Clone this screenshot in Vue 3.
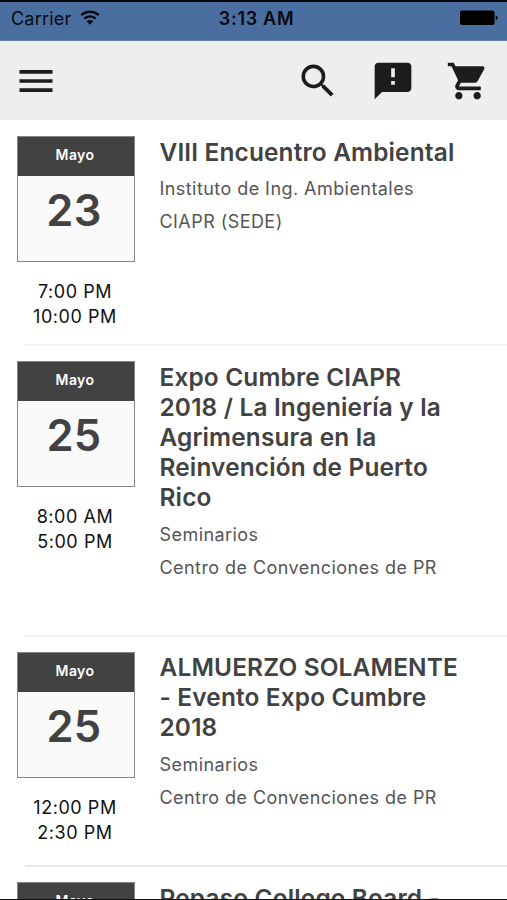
<script setup>
import { ref } from 'vue'

const eventos = ref([
  { id: 1, mes: 'Mayo', dia: 23, inicio: '7:00 PM', fin: '10:00 PM', titulo: ['VIII Encuentro Ambiental'], tipo: 'Instituto de Ing. Ambientales', lugar: 'CIAPR (SEDE)' },
  { id: 2, mes: 'Mayo', dia: 25, inicio: '8:00 AM', fin: '5:00 PM', titulo: ['Expo Cumbre CIAPR', '2018 / La Ingeniería y la', 'Agrimensura en la', 'Reinvención de Puerto', 'Rico'], tipo: 'Seminarios', lugar: 'Centro de Convenciones de PR' },
  { id: 3, mes: 'Mayo', dia: 25, inicio: '12:00 PM', fin: '2:30 PM', titulo: ['ALMUERZO SOLAMENTE', '- Evento Expo Cumbre', '2018'], tipo: 'Seminarios', lugar: 'Centro de Convenciones de PR' },
  { id: 4, mes: 'Mayo', dia: '', inicio: '', fin: '', titulo: ['Repaso College Board -'], tipo: '', lugar: '' }
])
</script>

<template>
  <div class="app">
    <div class="status">
      <div class="carrier">
        <span>Carrier</span>
        <svg width="20" height="15" viewBox="0 0 20 15" fill="none" stroke="#05090f" stroke-width="2.4">
          <path d="M1.2 5.2a12.8 12.8 0 0 1 17.6 0" />
          <path d="M4.300 8.700a8.200 8.200 0 0 1 11.400 0" />
          <path d="M6.600 11.300a4.900 4.900 0 0 1 6.800 0L10 14.700z" fill="#05090f" stroke="none" />
        </svg>
      </div>
      <span class="hora">3:13 AM</span>
      <svg class="bateria" width="38" height="16" viewBox="0 0 38 16">
        <rect x="0" y="0.5" width="34.5" height="14.5" rx="1.8" />
        <path d="M35.7 5.200c2.600.8 2.600 4.200 0 5z" />
      </svg>
    </div>

    <header class="toolbar">
      <button class="menu">
        <svg width="44" height="44" viewBox="0 0 24 24"><path d="M3 18h18v-2H3v2zm0-5h18v-2H3v2zm0-7v2h18V6H3z" /></svg>
      </button>
      <div class="acciones">
        <button>
          <svg width="44" height="44" viewBox="0 0 24 24"><path d="M15.5 14h-.79l-.28-.27A6.471 6.471 0 0 0 16 9.5 6.5 6.5 0 1 0 9.5 16c1.61 0 3.09-.59 4.23-1.57l.27.28v.79l5 4.99L20.49 19l-4.99-5zm-6 0C7.01 14 5 11.99 5 9.5S7.01 5 9.5 5 14 7.01 14 9.5 11.99 14 9.5 14z" /></svg>
        </button>
        <button>
          <svg width="44" height="44" viewBox="0 0 24 24"><path d="M20 2H4c-1.100 0-1.990.9-1.990 2L2 22l4-4h14c1.100 0 2-.9 2-2V4c0-1.100-.9-2-2-2zm-7 12h-2v-2h2v2zm0-4h-2V5h2v5z" /></svg>
        </button>
        <button>
          <svg width="44" height="44" viewBox="0 0 24 24"><path d="M7 18c-1.100 0-1.990.9-1.990 2S5.900 22 7 22s2-.9 2-2-.9-2-2-2zM1 2v2h2l3.600 7.590-1.350 2.450c-.16.28-.25.61-.25.96 0 1.100.9 2 2 2h12v-2H7.420c-.14 0-.25-.11-.25-.25l.03-.12.9-1.630h7.450c.75 0 1.410-.41 1.750-1.030l3.580-6.490c.08-.14.12-.31.12-.48 0-.55-.45-1-1-1H5.210l-.94-2H1zm16 16c-1.100 0-1.990.9-1.990 2s.89 2 1.990 2 2-.9 2-2-.9-2-2-2z" /></svg>
        </button>
      </div>
    </header>

    <ul class="lista">
      <li v-for="item in eventos" :key="item.id" :class="'evento-' + item.id">
        <div class="fecha">
          <div class="calendario">
            <div class="mes">{{ item.mes }}</div>
            <div class="dia">{{ item.dia }}</div>
          </div>
          <div class="horas">
            <div>{{ item.inicio }}</div>
            <div>{{ item.fin }}</div>
          </div>
        </div>
        <div class="detalle">
          <h2><span v-for="linea in item.titulo" :key="linea">{{ linea }}</span></h2>
          <p>{{ item.tipo }}</p>
          <p>{{ item.lugar }}</p>
        </div>
      </li>
    </ul>
  </div>
</template>

<style>
body {
  margin: 0;
  overflow: hidden;
}
</style>

<style scoped>
.app {
  box-sizing: border-box;
  width: 507px;
  height: 900px;
  display: flex;
  flex-direction: column;
  overflow: hidden;
  border-top: 2px solid #05070c;
  border-bottom: 1px solid #111;
  background: #fff;
  font-family: Inter, "Liberation Sans", sans-serif;
}

.status {
  box-sizing: border-box;
  flex: none;
  height: 39px;
  padding: 0 9px 6px 11px;
  display: grid;
  grid-template-columns: 1fr auto 1fr;
  align-items: center;
  background: #4a6e9f;
  color: #05090f;
  border-bottom: 1px solid #6482ab;
  font-size: 18px;
}

.carrier {
  display: flex;
  align-items: center;
  gap: 9px;
  letter-spacing: 0.2px;
}

.carrier svg {
  margin-top: -2px;
}

.hora {
  font-weight: 600;
  letter-spacing: 0.7px;
  margin-left: 4px;
}

.bateria {
  justify-self: end;
}

.toolbar {
  flex: none;
  height: 79px;
  padding: 0 17px 0 13.5px;
  display: flex;
  align-items: center;
  justify-content: space-between;
  background: #eee;
}

button {
  display: block;
  padding: 0;
  border: 0;
  background: none;
}

svg {
  display: block;
}

.toolbar svg {
  fill: #1c1c1c;
}

.acciones {
  display: flex;
  gap: 31.2px;
}

.lista {
  margin: 0;
  padding: 0;
  list-style: none;
}

li {
  box-sizing: border-box;
  display: flex;
  gap: 24.5px;
  padding: 16px 0 0 17px;
  background: linear-gradient(#f1f1f1, #f1f1f1) 25px 100% / 100% 1px no-repeat;
  box-shadow: 25px 1px 0 #f4f4f4;
}

.evento-1 {
  height: 225px;
  box-shadow: 25px 1px 0 #f7f7f7;
}

.evento-2 {
  height: 290.5px;
}

.evento-3 {
  height: 230.5px;
  background-image: linear-gradient(#e2e2e2, #e2e2e2);
  box-shadow: 25px 1px 0 #e8e8e8;
}

.evento-4 {
  box-shadow: none;
}

.fecha {
  flex: none;
  width: 118px;
}

.calendario {
  box-sizing: border-box;
  height: 126px;
  border: 1px solid #858585;
  background: #fafafa;
  text-align: center;
}

.mes {
  height: 39px;
  padding-right: 2px;
  line-height: 36px;
  background: #424242;
  color: #fff;
  font-size: 14px;
  font-weight: 600;
  letter-spacing: 0.4px;
}

.dia {
  padding-right: 4px;
  line-height: 69px;
  color: #424242;
  font-size: 43.5px;
  font-weight: 600;
  letter-spacing: 0.3px;
}

.horas {
  margin-top: 17px;
  padding-right: 2px;
  text-align: center;
  font-size: 18px;
  line-height: 25.4px;
  letter-spacing: 0.55px;
  color: #111;
}

h2 {
  margin: 0.5px 0 5px;
  font-size: 24.4px;
  line-height: 30.2px;
  font-weight: 600;
  letter-spacing: 0.17px;
  color: #424242;
}

h2 span {
  display: block;
  white-space: nowrap;
}

p {
  margin: 0;
  font-size: 18px;
  line-height: 33.2px;
  letter-spacing: 0.44px;
  color: #555;
}
</style>
